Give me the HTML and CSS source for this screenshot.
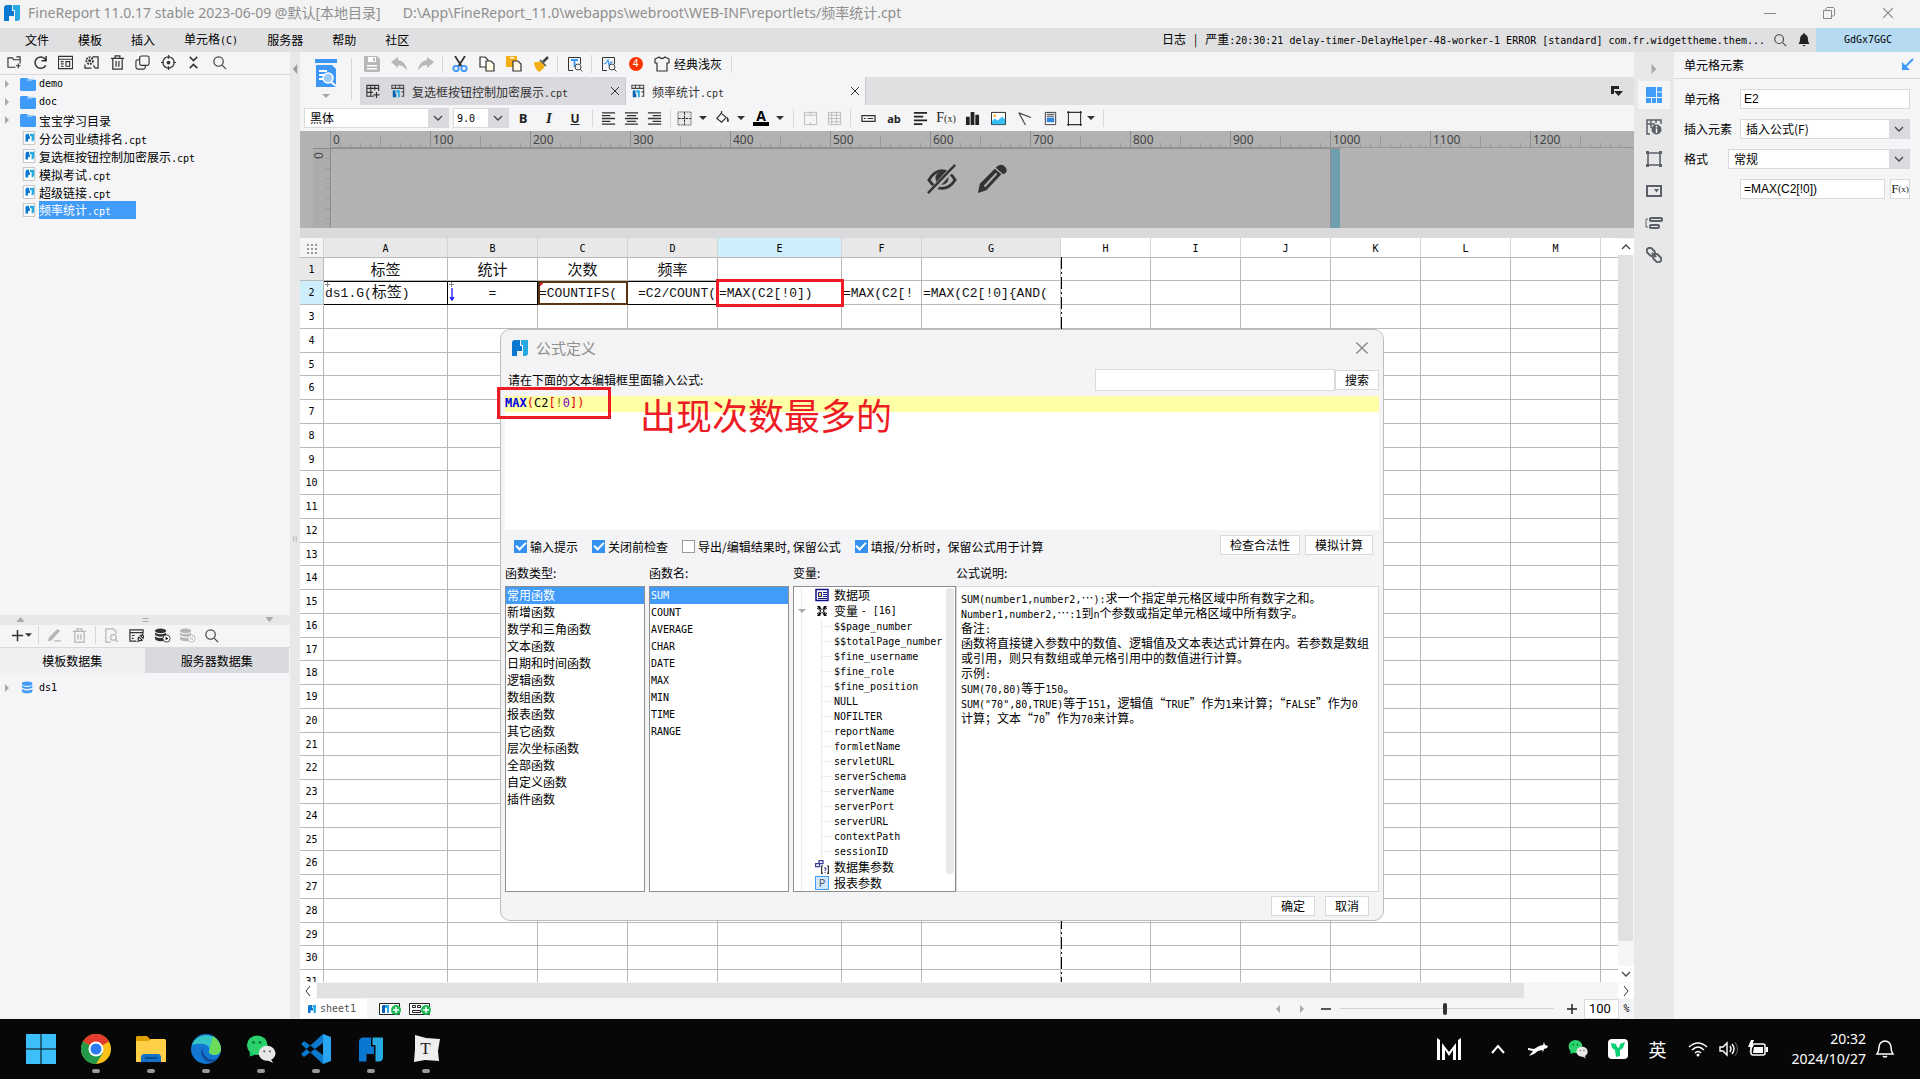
FILE: index.html
```html
<!DOCTYPE html>
<html lang="zh-CN">
<head>
<meta charset="utf-8">
<title>FineReport 11.0.17</title>
<link rel="stylesheet" href="styles.css">
</head>
<body>
<svg class="sprite" aria-hidden="true">
  <symbol id="logo" viewBox="0 0 16 16"><path fill="#0a78d0" d="M0 16V3Q0 0 3 0H8V6H10V11H5V16Z"/><path fill="#27aae1" d="M9 0H16V13Q16 16 13 16H11V5H9Z"/></symbol>
  <symbol id="search" viewBox="0 0 16 16"><g fill="none" stroke="#444" stroke-width="1.3"><circle cx="7" cy="7" r="5"/><path d="M11 11l4 4"/></g></symbol>
  <symbol id="chev" viewBox="0 0 10 10"><path fill="none" stroke="#444" stroke-width="1.3" d="M1 3l4 4 4-4"/></symbol>
  <symbol id="down" viewBox="0 0 8 8"><path fill="#333" d="M0 2h8L4 6z"/></symbol>
  <symbol id="right" viewBox="0 0 8 8"><path fill="#aaa" d="M2 0v8l4-4z"/></symbol>
  <symbol id="folder" viewBox="0 0 16 14"><path fill="#419bf9" d="M0 2l1-1h6l2 1 7 1v10l-1 1H1l-1-1z"/><path stroke="#cfe5ff" fill="none" d="M7 3h5l1-2"/></symbol>
  <symbol id="file" viewBox="0 0 16 16"><path fill="#fff" stroke="#bbb" d="M1.5.5h13v15h-13z"/><path fill="#0a78d0" d="M4 12V5l1-2h3v3h1v3H7v3z"/><path fill="#27aae1" d="M9 3h5v7l-2 2h-1V6H9z"/></symbol>
  <symbol id="trash" viewBox="0 0 16 16"><path fill="none" stroke="currentColor" stroke-width="1.3" d="M1 3.5h14M5.500 3V1h5v2M3 4v11h10V4M6.500 6.500v6M9.500 6.500v6"/></symbol>
  <symbol id="tabicon" viewBox="0 0 16 16"><path fill="none" stroke="#444" stroke-width="1.2" d="M1 6V1.500h13.500V14H12M1 5h13M5 1v4M10 1v4M12 9h3"/><path fill="#0a5fae" d="M2 15V8l1-1h2v4h1v4z"/><path fill="#27aae1" d="M6 7h4v8H8v-5H6z"/></symbol>
  <symbol id="close" viewBox="0 0 10 10"><path fill="none" stroke="currentColor" d="M1 1l8 8M9 1L1 9"/></symbol>
  <symbol id="lines" viewBox="0 0 16 16"><path stroke="#333" stroke-width="1.400" d="M1 2h14M1 5h9M1 8h14M1 11h9M1 14h14"/></symbol>
  <symbol id="wechat" viewBox="0 0 32 32"><ellipse cx="12" cy="12" rx="11" ry="10.500" fill="#2bd26b"/><path fill="#14c863" d="M4 18l0 6 6-2z"/><circle cx="8" cy="9" r="1.500" fill="#0b7a3a"/><circle cx="15" cy="9" r="1.500" fill="#0b7a3a"/><ellipse cx="22.500" cy="20.500" rx="9" ry="8" fill="#e8e8e8"/><path fill="#e8e8e8" d="M26 26l3 5-6-3z"/><circle cx="19.500" cy="18.500" r="1.200" fill="#666"/><circle cx="25.500" cy="18.500" r="1.200" fill="#666"/></symbol>
  <symbol id="db" viewBox="0 0 16 16"><ellipse cx="7" cy="3" rx="6" ry="2.500"/><path d="M1 5q6 3.500 12 0v2.500q-6 3.500-12 0zM1 9q6 3.500 12 0v2q0 3-6 3t-6-3z"/></symbol>
</svg>

<div class="app">
<header class="titlebar">
  <svg class="i16"><use href="#logo"/></svg>
  <span>FineReport 11.0.17 stable 2023-06-09 @默认[本地目录]</span>
  <span class="path">D:\App\FineReport_11.0\webapps\webroot\WEB-INF\reportlets/频率统计.cpt</span>
  <div class="wincontrols">
    <button aria-label="最小化"><svg class="i12" viewBox="0 0 12 12"><path stroke="#888" d="M0 6.500h12"/></svg></button>
    <button aria-label="还原"><svg class="i12" viewBox="0 0 12 12"><path fill="none" stroke="#888" d="M.5 3.500h8v8h-8zM3 3V1.500L4 .5h6.500l1 1V8l-1 1H9"/></svg></button>
    <button aria-label="关闭"><svg class="i12 grey"><use href="#close"/></svg></button>
  </div>
</header>

<nav class="menubar">
  <a href="#">文件</a><a href="#">模板</a><a href="#">插入</a><a href="#">单元格<span class="m">(C)</span></a><a href="#">服务器</a><a href="#">帮助</a><a href="#">社区</a>
  <div class="status">
    <div class="log"><span>日志</span><span>|</span><span>严重<span class="m">:20:30:21 delay-timer-DelayHelper-48-worker-1 ERROR [standard] com.fr.widgettheme.them...</span></span></div>
    <button class="menuicon" aria-label="搜索"><svg class="i14"><use href="#search"/></svg></button>
    <button class="menuicon" aria-label="通知"><svg class="i14" viewBox="0 0 14 14"><path fill="#222" d="M7 0q1 0 1 1.500Q11 2 11 7q0 2 1.500 4h-11Q3 9 3 7q0-5 3-5.500Q6 0 7 0zM5.500 12h3L7 13.500z"/></svg></button>
    <button class="user m">GdGx7GGC</button>
  </div>
</nav>

<div class="body">
<aside class="left">
  <section class="pane files">
    <div class="lefttools">
      <button aria-label="新建文件夹"><svg viewBox="0 0 16 16"><path fill="none" stroke="#333" stroke-width="1.2" d="M9 13H1V3h5l1 2h7V2h-4M14 5v4M12 9v5M9.500 11.500h5"/></svg></button>
      <button aria-label="刷新"><svg viewBox="0 0 16 16"><path fill="none" stroke="#333" stroke-width="1.600" d="M13.500 11a6 6 0 1 1-1-7L14 6M14 1v5H9"/></svg></button>
      <button aria-label="模板"><svg viewBox="0 0 16 16"><path fill="none" stroke="#333" stroke-width="1.2" d="M.5 1.500h15v13H.5zM1 4.500h14M3 7h3M3 9.500h3M3 12h3M8.500 7h4v5h-4z"/></svg></button>
      <button aria-label="设置"><svg viewBox="0 0 16 16"><path fill="none" stroke="#333" stroke-width="1.300" d="M9 2h6v12h-3M1 10v4h7M10 11l2 3"/><circle cx="6" cy="6" r="3.500" fill="none" stroke="#333" stroke-width="2" stroke-dasharray="2 1"/><circle cx="6" cy="6" r="1.500" fill="#333"/></svg></button>
      <button aria-label="删除"><svg><use href="#trash"/></svg></button>
      <button aria-label="复制"><svg viewBox="0 0 16 16"><g fill="none" stroke="#333" stroke-width="1.2"><rect x="5" y="1" width="10" height="10" rx="2"/><path d="M5 5H3Q1 5 1 7v6q0 2 2 2h6q2 0 2-2v-2"/></g></svg></button>
      <button aria-label="定位"><svg viewBox="0 0 16 16"><circle cx="8" cy="8" r="6" fill="none" stroke="#333" stroke-width="1.300"/><circle cx="8" cy="8" r="2" fill="#333"/><path stroke="#333" stroke-width="1.300" d="M8 0v4M8 12v4M0 8h3M13 8h3"/></svg></button>
      <button aria-label="折叠"><svg viewBox="0 0 16 16"><path fill="none" stroke="#333" stroke-width="1.600" d="M4 2l4 4 4-4M4 14l4-4 4 4"/></svg></button>
      <button aria-label="搜索"><svg><use href="#search"/></svg></button>
    </div>
    <ul class="tree">
      <li><svg class="tri"><use href="#right"/></svg><svg class="fi"><use href="#folder"/></svg><span class="m">demo</span></li>
      <li><svg class="tri"><use href="#right"/></svg><svg class="fi"><use href="#folder"/></svg><span class="m">doc</span></li>
      <li><svg class="tri"><use href="#right"/></svg><svg class="fi"><use href="#folder"/></svg><span>宝宝学习目录</span></li>
      <li class="leaf"><svg class="fi"><use href="#file"/></svg><span>分公司业绩排名<span class="m">.cpt</span></span></li>
      <li class="leaf"><svg class="fi"><use href="#file"/></svg><span>复选框按钮控制加密展示<span class="m">.cpt</span></span></li>
      <li class="leaf"><svg class="fi"><use href="#file"/></svg><span>模拟考试<span class="m">.cpt</span></span></li>
      <li class="leaf"><svg class="fi"><use href="#file"/></svg><span>超级链接<span class="m">.cpt</span></span></li>
      <li class="leaf"><svg class="fi"><use href="#file"/></svg><span class="picked">频率统计<span class="m">.cpt</span></span></li>
    </ul>
  </section>
  <section class="pane data">
    <div class="splitter"><svg viewBox="0 0 8 8"><path fill="#aaa" d="M0 6h8L4 1z"/></svg><svg viewBox="0 0 8 8"><path stroke="#aaa" d="M1 2.500h6M1 5.500h6"/></svg><svg viewBox="0 0 8 8"><path fill="#aaa" d="M0 1h8L4 6z"/></svg></div>
    <div class="datatools">
      <button aria-label="新增" class="wide"><svg viewBox="0 0 16 16"><path stroke="#333" stroke-width="1.600" d="M8 2v12M2 8h12"/></svg><svg class="i8"><use href="#down"/></svg></button><i class="sep"></i>
      <button aria-label="编辑" class="off"><svg viewBox="0 0 16 16"><path fill="#b5b5b5" d="M1 14l1-4 9-9 3 2-9 10zM8 13h7v1.500H8z"/></svg></button>
      <button aria-label="删除" class="off"><svg><use href="#trash"/></svg></button><i class="sep"></i>
      <button aria-label="预览" class="off"><svg viewBox="0 0 16 16"><g fill="none" stroke="#b5b5b5" stroke-width="1.300"><path d="M7 15H2V1h8l3 3v2"/><circle cx="10" cy="10" r="3"/><path d="M12 12l3 3"/></g></svg></button>
      <button aria-label="连接"><svg viewBox="0 0 16 16"><g fill="none" stroke="#333" stroke-width="1.300"><path d="M8 14H1V2h14v4M1 5h14M3 8h3M3 11h2"/><path d="M9 15l2-2M14 7l1-1M10.500 9.500l3.500 3.500q-2 1-3.500 0t0-3.500M12 8q2-1 3 0t0 3z"/></g></svg></button>
      <button aria-label="执行"><svg fill="#333"><use href="#db"/></svg><svg class="mini" viewBox="0 0 10 10"><circle cx="5" cy="5" r="4" fill="#fff" stroke="#333"/><path d="M4 3l3 2-3 2z"/></svg></button>
      <button aria-label="停止"><svg fill="#b5b5b5"><use href="#db"/></svg><svg class="mini" viewBox="0 0 10 10"><circle cx="5" cy="5" r="4" fill="#fff" stroke="#b5b5b5"/><path stroke="#aaa" d="M3 3l4 4M7 3L3 7"/></svg></button>
      <button aria-label="搜索"><svg><use href="#search"/></svg></button>
    </div>
    <div class="datatabs"><button class="on">模板数据集</button><button>服务器数据集</button></div>
    <ul class="tree dstree"><li><svg class="tri"><use href="#right"/></svg><svg class="fi" fill="#419bf9"><use href="#db"/></svg><span class="m">ds1</span></li></ul>
  </section>
</aside>
<div class="divider"><svg viewBox="0 0 8 12"><path fill="#999" d="M6 0v12L1 6z"/></svg><svg class="grip" viewBox="0 0 8 12"><path stroke="#aaa" d="M2.500 3v6M5.500 3v6"/></svg></div>

<main class="main">
  <div class="topbar">
    <button class="preview" aria-label="预览"><svg viewBox="0 0 22 28"><path fill="#3d97f5" d="M0 0h22v4H0zM1 6h16l4 4v18H1z"/><path stroke="#fff" stroke-width="2" d="M4 12h8M4 16h5M4 20h5"/><circle cx="13" cy="19" r="5" fill="#9fcbfa" stroke="#fff" stroke-width="1.500"/><path stroke="#fff" stroke-width="2" d="M16 23l5 4"/></svg><svg class="i8 fade"><use href="#down"/></svg></button>
    <div class="topright">
      <div class="tools">
        <button aria-label="保存"><svg viewBox="0 0 16 16"><path fill="#b8b8b8" d="M0 1l1-1h12l3 3v12l-1 1H1l-1-1z"/><path fill="#fff" d="M4 1h8v5H4zM3 9h10v1.500H3zM3 12h10v1.500H3z"/><path fill="#b8b8b8" d="M9 2h2v3H9z"/></svg></button>
        <button aria-label="撤销"><svg viewBox="0 0 16 16"><path fill="#b8b8b8" d="M0 6l7-5v3q8 1 9 11-3-6-9-6v3z"/></svg></button>
        <button aria-label="重做"><svg viewBox="0 0 16 16"><path fill="#b8b8b8" d="M16 6L9 1v3Q1 5 0 15q3-6 9-6v3z"/></svg></button><i class="sep"></i>
        <button aria-label="剪切"><svg viewBox="0 0 16 16"><path stroke="#333" stroke-width="1.800" d="M3 0l7 11M13 0L6 11"/><circle cx="4" cy="12.500" r="2.700" fill="none" stroke="#3d97f5" stroke-width="1.800"/><circle cx="12" cy="12.500" r="2.700" fill="none" stroke="#3d97f5" stroke-width="1.800"/></svg></button>
        <button aria-label="复制"><svg viewBox="0 0 16 16"><path fill="#fff" stroke="#333" stroke-width="1.200" d="M1 1h5l3 3v7H1z"/><path fill="#fffbe6" stroke="#333" stroke-width="1.200" d="M7 5h5l3 3v7H7z"/></svg></button>
        <button aria-label="粘贴"><svg viewBox="0 0 16 16"><path fill="#f5ae13" d="M0 0h11v11H0z"/><path fill="#fff" d="M4 1h4v1.500H4z"/><path fill="#fffbe6" stroke="#333" stroke-width="1.200" d="M7 5h5l3 3v7H7z"/></svg></button>
        <button aria-label="格式刷"><svg viewBox="0 0 16 16"><path stroke="#444" stroke-width="2.500" d="M15 1l-5 5"/><path fill="#f5ae13" d="M1 6q4 1 6-1l5 5q-2 4-6 6-5-4-5-10z"/><path stroke="#555" stroke-width="1.500" d="M7 4l6 6"/></svg></button><i class="sep"></i>
        <button aria-label="文字查找"><svg viewBox="0 0 16 16"><path fill="none" stroke="#333" d="M6 14.500H1.500V1.500h12V8"/><path stroke="#3d97f5" stroke-width="1.800" d="M4 4h7M7.500 4v7"/><circle cx="11" cy="11" r="3" fill="none" stroke="#444"/><path stroke="#444" d="M13 13l2.500 2.500"/></svg></button><i class="sep"></i>
        <button aria-label="性能分析"><svg viewBox="0 0 16 16"><path fill="none" stroke="#333" d="M6 14.500H1.500V1.500h12V8"/><path fill="none" stroke="#3d97f5" stroke-width="1.200" d="M3 8l2-1 2-3 1 5 2-3h2"/><circle cx="11" cy="11" r="3" fill="none" stroke="#444"/><path stroke="#444" d="M13 13l2.500 2.500"/></svg></button>
        <button aria-label="提醒"><span class="badge">4</span></button>
        <button class="theme"><svg viewBox="0 0 16 16"><path fill="none" stroke="#333" stroke-width="1.200" d="M5 1L1 3v4h2v8h10V7h2V3l-4-2q-3 3-6 0z"/></svg><span>经典浅灰</span></button><i class="sep"></i>
      </div>
      <div class="tabs">
        <button class="newtab" aria-label="新建"><svg class="i14" viewBox="0 0 16 16"><path fill="none" stroke="#333" stroke-width="1.300" d="M9 14H1V1.500h13.500V8M1 5h13M1 9.500h7M5.500 1v13M10 1v6M12 9v7M8.500 12.500h7"/></svg></button>
        <div class="tab"><svg class="i14"><use href="#tabicon"/></svg><span>复选框按钮控制加密展示<span class="m">.cpt</span></span><button aria-label="关闭"><svg class="i10"><use href="#close"/></svg></button></div>
        <div class="tab on"><svg class="i14"><use href="#tabicon"/></svg><span>频率统计<span class="m">.cpt</span></span><button aria-label="关闭"><svg class="i10"><use href="#close"/></svg></button></div>
        <button class="tablist" aria-label="标签列表"><svg class="i12" viewBox="0 0 12 12"><path fill="#222" d="M0 1h8v3H3v5H0zM3 6h9l-4.500 5z"/></svg></button>
      </div>
    </div>
  </div>

  <div class="format">
    <div class="combo fontname"><select aria-label="字体"><option>黑体</option></select><span class="arrow"><svg class="i10"><use href="#chev"/></svg></span></div>
    <div class="combo fontsize"><select aria-label="字号"><option>9.0</option></select><span class="arrow"><svg class="i10"><use href="#chev"/></svg></span></div>
    <button class="f bold">B</button><button class="f ital">I</button><button class="f under">U</button><i class="sep"></i>
    <button class="al" aria-label="左对齐"><svg><use href="#lines"/></svg></button>
    <button class="al" aria-label="居中"><svg viewBox="0 0 16 16"><path stroke="#333" stroke-width="1.400" d="M1 2h14M3 5h10M1 8h14M3 11h10M1 14h14"/></svg></button>
    <button class="al" aria-label="右对齐"><svg viewBox="0 0 16 16"><path stroke="#333" stroke-width="1.400" d="M1 2h14M6 5h9M1 8h14M6 11h9M1 14h14"/></svg></button><i class="sep"></i>
    <button class="dd" aria-label="边框"><svg viewBox="0 0 16 16"><rect x="1" y="1" width="14" height="14" fill="#e8e8e8" stroke="#222" stroke-dasharray="1 1"/><path stroke="#222" d="M1 8h14M8 1v14" stroke-dasharray="3 1"/></svg><svg class="i8"><use href="#down"/></svg></button>
    <button class="dd" aria-label="填充"><svg viewBox="0 0 16 16"><path fill="none" stroke="#333" stroke-width="1.300" d="M6 2l6 5-5 5-5-4 5-6V0"/><path fill="#333" d="M13 6q3 4 1 6-2-1-1-6z"/><path fill="#fff" d="M0 13h16v3H0z"/></svg><svg class="i8"><use href="#down"/></svg></button>
    <button class="dd" aria-label="字体颜色"><span class="acolor">A</span><svg class="i8"><use href="#down"/></svg></button><i class="sep"></i>
    <button class="mg" aria-label="合并"><svg viewBox="0 0 16 16"><path fill="none" stroke="#bbb" d="M1.500 1.500h13v13h-13zM1 4.500h14M8 1v3M8 12v3"/></svg></button>
    <button class="mg" aria-label="拆分"><svg viewBox="0 0 16 16"><path fill="none" stroke="#bbb" d="M1.500 1.500h13v13h-13zM1 4.500h14M1 8h14M1 11.500h14M5 1v14M10 1v14"/></svg></button><i class="sep"></i>
    <button class="f" aria-label="控件"><svg viewBox="0 0 16 16"><path fill="none" stroke="#333" stroke-width="1.300" d="M1 5h14v6H1zM3 8h2M7 8h6"/></svg></button>
    <button class="f ab">ab</button>
    <button class="f" aria-label="富文本"><svg viewBox="0 0 16 16"><path stroke="#222" stroke-width="2" d="M1 2h14M1 6h10M1 10h14M1 14h9"/></svg></button>
    <button class="f fx">F<small>(x)</small></button>
    <button class="f" aria-label="图表"><svg viewBox="0 0 16 16"><path fill="#222" d="M1 6h4v9H1zM6 1h4v14H6zM11 4h4v11h-4z"/></svg></button>
    <button class="f" aria-label="图片"><svg viewBox="0 0 16 16"><path fill="#fff" stroke="#222" d="M.5 1.500h15v13H.5z"/><circle cx="4" cy="5" r="1.500" fill="#f8b84a"/><path fill="#35bdf5" d="M1 11l3-3 3 2 5-4 3 3v5H1z"/></svg></button>
    <button class="f" aria-label="斜线"><svg viewBox="0 0 16 16"><path fill="none" stroke="#444" stroke-width="1.200" d="M2 2l13 5M2 2l7 13"/></svg></button>
    <button class="f" aria-label="子报表"><svg viewBox="0 0 16 16"><path fill="#fff" stroke="#333" d="M2.500 1.500h11v13h-11z"/><path stroke="#333" d="M4 3.500h8M4 5.500h8"/><path fill="#2f84dd" d="M4 7h8v5H4z"/></svg></button>
    <button class="dd float" aria-label="悬浮元素"><svg viewBox="0 0 16 16"><path fill="none" stroke="#333" stroke-width="1.200" d="M0 1.500h16M0 14.500h16M1.500 0v16M14.500 0v16"/></svg><svg class="i8"><use href="#down"/></svg></button><i class="sep"></i>
  </div>

  <div class="canvas">
    <div class="hruler" id="hruler"></div>
    <div class="vruler"><span>0</span></div>
    <div class="paper"></div>
    <div class="hint">
      <svg viewBox="0 0 32 32"><path fill="none" stroke="#333" stroke-width="3" d="M2 17Q8 7 16 7t14 10q-6 9-14 9T2 17z"/><circle cx="16" cy="15" r="7" fill="#333"/><path stroke="#b2b2b2" stroke-width="6" d="M30 2L3 31"/><path stroke="#333" stroke-width="2.500" d="M30 1L1 31"/></svg>
      <svg viewBox="0 0 32 32"><path fill="#333" d="M1 31l2-10L19 5l7 6-16 17zM21 3q4-4 8-1t2 7l-3 2-8-7z"/><path stroke="#b2b2b2" stroke-width="2" d="M8 24L21 10"/></svg>
    </div>
  </div>
  <div class="band"></div>

  <div class="sheetarea">
    <div class="sheet">
      <table id="grid">
        <colgroup><col class="c24"><col class="c124"><col class="c90"><col class="c90"><col class="c90"><col class="c124"><col class="c80"><col class="c139"><col class="c90"><col class="c90"><col class="c90"><col class="c90"><col class="c90"><col class="c90"><col class="c90"></colgroup>
        <thead><tr><th class="corner"><svg class="i10" viewBox="0 0 10 10"><path stroke="#999" stroke-width="2" stroke-dasharray="2 2" d="M0 1h10M0 5h10M0 9h10"/></svg></th><th>A</th><th>B</th><th>C</th><th>D</th><th class="hot">E</th><th>F</th><th>G</th><th class="free">H</th><th class="free">I</th><th class="free">J</th><th class="free">K</th><th class="free">L</th><th class="free">M</th><th class="free"></th></tr></thead>
        <tbody>
          <tr><th>1</th><td class="mid">标签</td><td class="mid">统计</td><td class="mid">次数</td><td class="mid">频率</td><td></td><td></td><td></td><td></td><td></td><td></td><td></td><td></td><td></td><td></td></tr>
          <tr class="formulas"><th class="hot">2</th><td class="box mark"><span class="c">ds1.G(</span>标签<span class="c">)</span></td><td class="box mid mark"><svg class="flow" viewBox="0 0 6 16"><path fill="none" stroke="#00f" stroke-width="1.200" d="M3 3v12M1 12l2 3 2-3"/></svg><span class="c">=</span></td><td class="box picked"><span class="c">=COUNTIFS(</span></td><td class="box end"><span class="c">=C2/COUNT(</span></td><td class="target"><span class="c">=MAX(C2[!0])</span></td><td><span class="c">=MAX(C2[!</span></td><td><span class="c">=MAX(C2[!0]{AND(</span></td><td></td><td></td><td></td><td></td><td></td><td></td><td></td></tr>
        </tbody>
      </table>
      <div class="pagebreak"></div>
    </div>
    <div class="vscroll"><button aria-label="上"><svg class="i10 flip"><use href="#chev"/></svg></button><div class="thumb"></div><button aria-label="下"><svg class="i10"><use href="#chev"/></svg></button></div>
  </div>
  <div class="hscroll"><button aria-label="左"><svg class="i10" viewBox="0 0 10 10"><path fill="none" stroke="#333" d="M7 0L3 5l4 5"/></svg></button><div class="thumb"></div><button aria-label="右"><svg class="i10" viewBox="0 0 10 10"><path fill="none" stroke="#333" d="M3 0l4 5-4 5"/></svg></button></div>
  <div class="sheetbar">
    <button class="sheettab"><svg class="i8"><use href="#logo"/></svg><span class="m">sheet1</span></button>
    <button class="add" aria-label="新增报表"><svg viewBox="0 0 22 14"><path fill="#fff" stroke="#222" d="M.5 1.500h20v11H.5z"/><path fill="#0a5fae" d="M3 11V4l1-1h2v8z"/><path fill="#27aae1" d="M6 3h4v8H8V6H6z"/><circle cx="17" cy="8" r="5" fill="#1db954"/><path stroke="#fff" stroke-width="1.500" d="M17 5v6M14 8h6"/></svg></button>
    <button class="add" aria-label="新增表单"><svg viewBox="0 0 22 14"><path fill="#fff" stroke="#222" d="M.5 1.500h20v11H.5zM3.500 3.500h3v2h-3zM8.500 3.500h3v2h-3zM3.500 8.500h8v2h-8z"/><circle cx="17" cy="8" r="5" fill="#1db954"/><path stroke="#fff" stroke-width="1.500" d="M17 5v6M14 8h6"/></svg></button>
    <div class="zoombar">
      <button aria-label="上一页"><svg class="i8" viewBox="0 0 8 8"><path fill="#aaa" d="M6 0v8L2 4z"/></svg></button>
      <button aria-label="下一页"><svg class="i8"><use href="#right"/></svg></button>
      <button aria-label="缩小"><svg class="i10" viewBox="0 0 10 10"><path stroke="#222" stroke-width="1.500" d="M0 5h10"/></svg></button>
      <input type="range" min="0" max="200" value="98" aria-label="缩放">
      <button aria-label="放大"><svg class="i10" viewBox="0 0 10 10"><path stroke="#222" stroke-width="1.500" d="M0 5h10M5 0v10"/></svg></button>
      <input class="pct" type="text" value="100" aria-label="缩放比例"><span class="m">%</span>
    </div>
  </div>

  <section class="dialog" role="dialog" aria-label="公式定义">
    <header><svg class="i16"><use href="#logo"/></svg><h2>公式定义</h2><button aria-label="关闭"><svg class="i14 grey"><use href="#close"/></svg></button></header>
    <div class="find"><label for="q">请在下面的文本编辑框里面输入公式:</label><input id="q" type="text"><button class="btn">搜索</button></div>
    <div class="editor"><div class="line"><b>MAX</b><span class="red">(</span>C2<span class="red">[</span><span class="olive">!</span><span class="purple">0</span><span class="red">])</span></div>
      <div class="formulabox"></div><p class="note">出现次数最多的</p></div>
    <div class="options">
      <label><input type="checkbox" checked>输入提示</label>
      <label><input type="checkbox" checked>关闭前检查</label>
      <label><input type="checkbox">导出/编辑结果时, 保留公式</label>
      <label><input type="checkbox" checked>填报/分析时，保留公式用于计算</label>
      <div class="checks"><button class="btn">检查合法性</button><button class="btn">模拟计算</button></div>
    </div>
    <div class="cols">
      <div class="col"><h3>函数类型:</h3><ul class="list"><li class="on">常用函数</li><li>新增函数</li><li>数学和三角函数</li><li>文本函数</li><li>日期和时间函数</li><li>逻辑函数</li><li>数组函数</li><li>报表函数</li><li>其它函数</li><li>层次坐标函数</li><li>全部函数</li><li>自定义函数</li><li>插件函数</li></ul></div>
      <div class="col"><h3>函数名:</h3><ul class="list names"><li class="on">SUM</li><li>COUNT</li><li>AVERAGE</li><li>CHAR</li><li>DATE</li><li>MAX</li><li>MIN</li><li>TIME</li><li>RANGE</li></ul></div>
      <div class="col vars"><h3>变量:</h3>
        <div class="list varlist"><ul class="vartree">
          <li class="top"><svg viewBox="0 0 14 14"><path fill="#fff" stroke="#11118a" stroke-width="1.500" d="M1 1.500h12v11H1z"/><path fill="#ffe94d" stroke="#11118a" d="M3.500 4.500h3v4h-3z"/><path stroke="#11118a" d="M8 4.500h4M8 6.500h4M8 8.500h4M3 10.500h9"/></svg>数据项</li>
          <li class="top open"><svg viewBox="0 0 14 14"><path fill="#111" d="M2 2l3 0 2 4-3-1zM12 2L9 2 7 6l3-1zM2 12l3 0 2-4-3 1zM12 12l-3 0-2-4 3 1z"/><path stroke="#111" d="M2 4l4 3-4 3M12 4L8 7l4 3" fill="none"/></svg>变量 <span class="m">- [16]</span></li>
          <li class="sub"><ul class="m"><li>$$page_number</li><li>$$totalPage_number</li><li>$fine_username</li><li>$fine_role</li><li>$fine_position</li><li>NULL</li><li>NOFILTER</li><li>reportName</li><li>formletName</li><li>servletURL</li><li>serverSchema</li><li>serverName</li><li>serverPort</li><li>serverURL</li><li>contextPath</li><li>sessionID</li></ul></li>
          <li class="top"><svg viewBox="0 0 14 14"><path fill="none" stroke="#3a3a9a" stroke-width="1.200" d="M4 .6h4v3H4zM.6 3.600h4v3h-4z"/><path fill="none" stroke="#333" stroke-width="1.200" d="M8 6H6.600v7.400H8M12 6h1.400v7.400H12"/><path fill="none" stroke="#3a3a9a" d="M9 8h2v1.500l-1 .5v1M10 12v1"/></svg>数据集参数</li>
          <li class="top"><span class="p">P</span>报表参数</li>
        </ul><div class="bar"></div></div>
      </div>
      <div class="col desc"><h3>公式说明:</h3>
        <div class="list text">
          <p><span class="m">SUM(number1,number2,</span>⋯<span class="m">):</span>求一个指定单元格区域中所有数字之和。</p>
          <p><span class="m">Number1,number2,</span>⋯<span class="m">:1</span>到<span class="m">n</span>个参数或指定单元格区域中所有数字。</p>
          <p>备注<span class="m">:</span></p>
          <p>函数将直接键入参数中的数值、逻辑值及文本表达式计算在内。若参数是数组或引用，则只有数组或单元格引用中的数值进行计算。</p>
          <p>示例<span class="m">:</span></p>
          <p><span class="m">SUM(70,80)</span>等于<span class="m">150</span>。</p>
          <p><span class="m">SUM("70",80,TRUE)</span>等于<span class="m">151</span>，逻辑值“<span class="m">TRUE</span>”作为<span class="m">1</span>来计算；“<span class="m">FALSE</span>”作为<span class="m">0</span><br>计算；文本“<span class="m">70</span>”作为<span class="m">70</span>来计算。</p>
        </div>
      </div>
    </div>
    <footer><button class="btn">确定</button><button class="btn">取消</button></footer>
  </section>
</main>

<nav class="strip">
  <svg class="collapse"><use href="#right"/></svg>
  <button class="on" aria-label="单元格元素"><svg viewBox="0 0 16 16"><path fill="#419bf9" d="M0 0h10v10H0zM11 0h5v4.500h-5zM11 5.500h5V10h-5zM0 11h5v5H0zM6 11h4v5H6zM11 11h5v5h-5z"/></svg></button>
  <button aria-label="单元格属性"><svg viewBox="0 0 16 16"><path fill="none" stroke="#5a5f68" stroke-width="1.500" d="M15 5V1H1v14h3M1 5h8M5 1v8M10 1v3"/><circle cx="10.500" cy="10.500" r="5" fill="#5a5f68"/><path stroke="#fff" stroke-width="1.500" d="M10.500 7v1.500M10.500 9.500V14"/></svg></button>
  <button aria-label="悬浮元素"><svg viewBox="0 0 16 16"><path fill="none" stroke="#5a5f68" stroke-width="1.600" d="M2 2h12v12H2z"/><path fill="#5a5f68" d="M0 0h3v3H0zM13 0h3v3h-3zM0 13h3v3H0zM13 13h3v3h-3z"/></svg></button>
  <button aria-label="控件设置"><svg viewBox="0 0 16 16"><path fill="none" stroke="#5a5f68" stroke-width="2" d="M1 3h14v10H1z"/><path fill="#5a5f68" d="M8 6h5l-2.500 3.500z"/></svg></button>
  <button aria-label="条件属性"><svg class="cond" viewBox="0 0 18 16"><g fill="none" stroke="#5a5f68" stroke-width="2"><rect x="5" y="3" width="12" height="3" rx="1"/><rect x="5" y="10" width="9" height="3" rx="1"/><path stroke-width="1" d="M3 4H1v8h2"/></g></svg></button>
  <button aria-label="超级链接"><svg viewBox="0 0 16 16"><g fill="none" stroke="#5a5f68" stroke-width="2" transform="rotate(45 8 8)"><rect x="-1" y="5" width="9" height="6" rx="3"/><rect x="8" y="5" width="9" height="6" rx="3"/><path d="M5 8h6"/></g></svg></button>
</nav>

<aside class="props">
  <header><h2>单元格元素</h2><svg class="i12" viewBox="0 0 12 12"><path fill="none" stroke="#419bf9" stroke-width="2" d="M11 1L2 10"/><path fill="#419bf9" d="M0 4v8h8z"/></svg></header>
  <form>
    <div class="row"><label for="cell">单元格</label><input id="cell" type="text" value="E2"></div>
    <div class="row"><label for="el">插入元素</label><div class="combo"><select id="el"><option>插入公式(F)</option></select><span class="arrow"><svg class="i10"><use href="#chev"/></svg></span></div></div>
    <div class="row short"><label for="fmt">格式</label><div class="combo"><select id="fmt"><option>常规</option></select><span class="arrow"><svg class="i10"><use href="#chev"/></svg></span></div></div>
    <div class="row"><label for="expr"></label><input id="expr" type="text" value="=MAX(C2[!0])" aria-label="公式"><button type="button" class="fxbtn fx">F<small>(x)</small></button></div>
  </form>
</aside>
</div>

<footer class="taskbar">
  <div class="apps">
    <button class="start" aria-label="开始"><svg viewBox="0 0 30 30"><path fill="#3cc0fb" d="M0 0h14.500v14.500H0zM15.500 0H30v14.500H15.500zM0 15.500h14.500V30H0zM15.500 15.500H30V30H15.500z"/></svg></button>
    <button aria-label="Chrome"><svg viewBox="0 0 30 30"><circle cx="15" cy="15" r="15" fill="#fbc116"/><path fill="#e33b2e" d="M15 15L2 7.500a15 15 0 0 1 26 0z"/><path fill="#229a4a" d="M15 15L2 7.500A15 15 0 0 0 15 30l7-11z"/><circle cx="15" cy="15" r="7.500" fill="#fff"/><circle cx="15" cy="15" r="5.500" fill="#2a7bef"/></svg></button>
    <button aria-label="资源管理器"><svg viewBox="0 0 30 30"><path fill="#e0a000" d="M0 3l1-1h10l3 3v5H0z"/><path fill="#ffcf48" d="M0 7h12l3-2h14l1 1v22H0z"/><path fill="#1473c8" d="M5 28v-6l2-2h16l2 2v6z"/><path stroke="#0a4c91" stroke-width="2" d="M9 24h12"/></svg></button>
    <button aria-label="Edge"><svg viewBox="0 0 30 30"><circle cx="15" cy="15" r="15" fill="#1276d3"/><path fill="#35c5c4" d="M1 11a15 15 0 0 1 29 5q-1 5-7 5-6-1-5-3 2-6-5-8-6-1-12 1z"/><path fill="#6ddc5a" d="M22 2q8 5 8 14-1 5-7 5-5-1-5-3z"/><path fill="#0d4d9c" d="M12 13q-5 7 3 14 6 3 11-2-8 2-12-3-3-5-2-9z"/></svg></button>
    <button aria-label="微信"><svg><use href="#wechat"/></svg></button>
    <button aria-label="VS Code"><svg viewBox="0 0 30 30"><path fill="#0b79cb" d="M22 0L0 20l3 3L22 9zM22 30L0 10l3-3 19 14z"/><path fill="#2aa5f3" d="M22 0l8 3v24l-8 3z"/></svg></button>
    <button aria-label="FineReport"><svg class="fr"><use href="#logo"/></svg></button>
    <button aria-label="Typora"><svg viewBox="0 0 30 30"><path fill="#eee" d="M4 1l11 3L29 5l-2 12 1 10-14-1-11 2 1-13z"/></svg><span class="ty">T</span></button>
  </div>
  <div class="tray">
    <span><svg class="big" viewBox="0 0 24 24"><path fill="#fff" d="M0 1l3 2v20H0zM24 1l-3 2v20h3zM5 23V6l7 9 7-9v17h-3V13l-4 6-4-6v10z"/></svg></span>
    <span><svg viewBox="0 0 20 20"><path fill="none" stroke="#fff" stroke-width="2" d="M4 14l6-7 6 7"/></svg></span>
    <span><svg viewBox="0 0 20 20"><path fill="#fff" d="M0 9l6 1 5-3 4-1 1-3 1 3 3 1-1 2-3 1-1 3-1-2-4 1-4 3-5 2 4-5-5-1z"/></svg></span>
    <span><svg><use href="#wechat"/></svg></span>
    <span><svg viewBox="0 0 20 20"><rect width="20" height="20" rx="4" fill="#fff"/><path fill="#08cf73" d="M3 4l5 1 1 3 2 1 1-4 5-2-2 6-3 2v6l-4 1-1-7-3-2z"/></svg></span>
    <span class="ime">英</span>
    <span class="sys"><svg viewBox="0 0 20 20"><g fill="none" stroke="#fff" stroke-width="1.600"><path d="M1 8q9-8 18 0M4 11q6-6 12 0M7 14q3-3 6 0"/></g><circle cx="10" cy="16" r="1.500" fill="#fff"/></svg></span>
    <span class="sys"><svg viewBox="0 0 20 20"><path fill="none" stroke="#fff" stroke-width="1.400" d="M2 8h3l4-4v12l-4-4H2zM12 7q2 3 0 6M14 5q4 5 0 10"/><path fill="none" stroke="#666" d="M17 3q5 7 0 14"/></svg></span>
    <span class="sys"><svg viewBox="0 0 20 20"><rect x="3" y="5" width="14" height="11" rx="2" fill="none" stroke="#fff" stroke-width="1.500"/><path fill="#fff" d="M6 8h9v6H5zM18 8h2v5h-2zM3 1L0 8h3l-2 6 5-8H4l2-5z"/></svg></span>
    <div class="clock"><span>20:32</span><span>2024/10/27</span></div>
    <svg class="bell" viewBox="0 0 20 20"><path fill="none" stroke="#fff" stroke-width="1.500" d="M2 15q2-3 2-7a6 6 0 0 1 12 0q0 4 2 7zM8 17q2 2 4 0"/></svg>
  </div>
</footer>
</div>
<script src="grid.js"></script>
</body>
</html>
```
FILE: styles.css
```css
* { box-sizing: border-box; }
body, h2, h3, p, ul { margin: 0; padding: 0; font-size: 12px; font-weight: 400; }
ul { list-style: none; }
body { font-family: "Noto Sans CJK SC", sans-serif; color: #000; background: #f5f5f7; line-height: 15px; overflow: hidden; }
button { border: 0; padding: 0; margin: 0; background: none; font: inherit; color: inherit; display: flex; align-items: center; justify-content: center; }
input, select { font: inherit; color: inherit; margin: 0; border-radius: 0; }
a { color: inherit; text-decoration: none; }
svg { display: block; flex: none; }
.sprite { position: absolute; width: 0; height: 0; }
.m { font-family: "DejaVu Sans Mono", monospace; font-size: 10px; line-height: 10px; }
.i8 { width: 8px; height: 8px; }
.i10 { width: 10px; height: 10px; }
.i12 { width: 12px; height: 12px; }
.i14 { width: 14px; height: 14px; }
.i16 { width: 16px; height: 16px; }
.grey { color: #888; }
.flip { transform: rotate(180deg); }
.sep { width: 7px; height: 18px; flex: none; background: linear-gradient(#d8d8da, #d8d8da) center / 1px 100% no-repeat; }

.app { display: flex; flex-direction: column; height: 100vh; }

.titlebar { flex: none; height: 28px; background: #f3f3f3; display: flex; align-items: center; padding: 0 0 2px 4px; font: 14px/20px "Noto Sans", "Noto Sans CJK SC", sans-serif; color: #8f8f8f; white-space: nowrap; }
.titlebar .i16 { margin-right: 8px; }
.titlebar .path { margin-left: 22px; }
.wincontrols { margin-left: auto; display: flex; padding-right: 3px; }
.wincontrols button { width: 59px; height: 26px; }

.menubar { flex: none; height: 24px; background: #e0e0e2; display: flex; align-items: center; gap: 29px; padding-left: 25px; white-space: nowrap; line-height: 13px; }
.menubar a, .log { padding-bottom: 2px; }
.status { margin-left: auto; display: flex; align-items: center; }
.log { display: flex; gap: 8px; margin-right: 3px; }
.menuicon { width: 24px; height: 24px; }
.user { width: 104px; height: 24px; background: #b5daf2; }

.body { flex: 1; min-height: 0; display: flex; }

.left { width: 290px; flex: none; display: flex; flex-direction: column; }
.pane { flex: 563 1 0; min-height: 0; }
.pane.data { flex-grow: 404; }
.lefttools { height: 23px; border-bottom: 1px solid #d8d8da; display: flex; align-items: center; justify-content: space-between; width: 100%; padding: 0 63px 2px 7px; }
.lefttools svg { width: 15px; height: 15px; color: #333; }
.tree li { display: flex; align-items: center; height: 18px; padding-left: 3px; white-space: nowrap; }
.tree .tri { width: 8px; height: 10px; margin-right: 9px; }
.tree .fi { width: 16px; height: 14px; margin-right: 3px; }
.tree .leaf { padding-left: 21px; }
.tree .leaf .fi { margin-right: 2px; }
.tree .picked { background: #419bf9; color: #fff; height: 18px; line-height: 18px; width: 97px; }
.splitter { height: 10px; background: #e8e8e8; display: flex; justify-content: space-between; align-items: center; padding: 0 16px; }
.splitter svg { width: 9px; height: 8px; }
.datatools { height: 23px; border-bottom: 1px solid #d8d8da; display: flex; align-items: center; padding: 0 0 2px 7px; }
.datatools svg { width: 15px; height: 15px; }
.datatools .i8 { width: 7px; height: 8px; }
.datatools button { width: 25px; position: relative; }
.datatools .wide { width: 28px; }
.datatools .mini { position: absolute; right: 3px; bottom: 0; width: 9px; height: 9px; }
.off { color: #b5b5b5; }
.datatabs { display: flex; height: 25px; }
.datatabs button { flex: 1; background: #d9dade; margin-right: 1px; padding-bottom: 1px; }
.datatabs button.on { background: #f0f0f2; margin: 0; }
.dstree { padding-top: 6px; }
.divider { width: 10px; flex: none; background: #e8e8e8; display: flex; flex-direction: column; align-items: center; padding-top: 12px; }
.divider svg { width: 7px; height: 10px; }
.divider .grip { margin-top: 460px; width: 8px; }

.main { flex: 1; min-width: 0; display: flex; flex-direction: column; position: relative; }
.topbar { display: flex; height: 53px; flex: none; }
.preview { width: 52px; margin: 6px 6px 5px 0; border-right: 1px solid #d8d8da; flex-direction: column; justify-content: flex-start; gap: 5px; padding-top: 1px; }
.preview svg:first-child { width: 22px; height: 28px; }
.preview .fade { opacity: .4; }
.topright { flex: 1; min-width: 0; }
.tools { height: 25px; display: flex; align-items: center; padding-bottom: 2px; }
.tools button { width: 27px; height: 22px; }
.tools svg { width: 16px; height: 16px; }
.tools .theme { width: auto; padding: 0 6px 0 5px; gap: 4px; }
.badge { width: 14px; height: 14px; border-radius: 7px; background: #ff3300; color: #fff; font: 10px/14px Roboto, sans-serif; }
.tabs { height: 28px; margin-left: 2px; background: #e0e0e3; display: flex; align-items: stretch; color: #333; }
.newtab { width: 26px; background: #dadade; }
.tab { width: 240px; background: #dadade; display: flex; align-items: center; gap: 7px; padding-left: 5px; border-right: 1px solid #c9c9cd; white-space: nowrap; }
.tab.on { background: #f5f5f7; }
.tab button { margin: 0 5px 0 auto; }
.tablist { margin: 0 11px 0 auto; }

.format { height: 26px; flex: none; display: flex; align-items: center; padding-left: 4px; }
.format .sep { width: 9px; }
.format button { height: 22px; flex: none; }
.format button svg:first-child { width: 15px; height: 15px; }
.combo { display: grid; grid-template-columns: 1fr 20px; height: 20px; border: 1px solid #dadadd; background: #fff; }
.combo select { grid-area: 1 / 1 / 2 / 3; appearance: none; border: 0; background: none; padding: 0 5px; line-height: 18px; width: 100%; min-width: 0; }
.combo .arrow { grid-area: 1 / 2; background: #dadbde; display: grid; place-items: center; pointer-events: none; }
.fontname { width: 145px; margin-right: 4px; }
.fontsize { width: 56px; margin-right: 1px; }
.fontsize select { font: 10px "DejaVu Sans Mono", monospace; padding: 0 3px; }
.format .f { width: 26px; color: #222; }
.format .al { width: 23px; }
.format .mg { width: 24px; }
.format .dd { width: 38px; gap: 7px; justify-content: flex-start; padding-left: 2px; }
.format .float { width: 36px; gap: 5px; padding-left: 4px; }
.format .bold { font: 700 13px "Open Sans", sans-serif; }
.format .ital { font: italic 700 15px "Liberation Serif", serif; }
.format .under { font: 700 12px "Open Sans", sans-serif; text-decoration: underline; }
.format .ab { font: 700 11px "Open Sans", sans-serif; }
.acolor { width: 16px; height: 16px; border-bottom: 4px solid #000; font: 700 14px/11px "Open Sans", sans-serif; }
.fx { font: 14px "Liberation Serif", serif; color: #222; }
.fx small { font-size: 10px; }

.canvas { height: 97px; flex: none; background: #b2b2b2; display: grid; grid-template: 17px 1fr / 30px 1fr; position: relative; overflow: hidden; }
.hruler { grid-area: 1 / 2; display: flex; overflow: hidden; border-bottom: 1px solid #969696; }
.hruler span { flex: none; width: 100px; border-left: 1px solid #8f8f8f; padding-left: 2px; font: 12px/18px "Noto Sans", sans-serif; height: 16px; color: #444;
  background: linear-gradient(#989898, #989898) 49px 100% / 1px 11px no-repeat, repeating-linear-gradient(90deg, transparent 0 9px, #989898 9px 10px) 0 100% / 100% 4px no-repeat; }
.vruler { grid-area: 2 / 1; margin-left: 13px; border-top: 1px solid #8a8a8a; background: repeating-linear-gradient(transparent 0 9px, #989898 9px 10px) 100% 0 / 4px 100% no-repeat, #acacac; }
.vruler span { display: block; writing-mode: vertical-rl; transform: rotate(180deg); width: 12px; height: 10px; font: 12px/12px "Noto Sans", sans-serif; color: #444; }
.paper { grid-area: 2 / 2; width: 1010px; border: solid #8e8e8e; border-width: 1px 0 0 1px; background: linear-gradient(90deg, #8e8e8e 1px, #6f9fae 1px) 100% 0 / 10px 100% no-repeat; }
.hint { position: absolute; inset: 0; display: flex; align-items: center; justify-content: center; gap: 18px; padding-bottom: 2px; }
.hint svg { width: 32px; height: 30px; }
.band { height: 10px; flex: none; background: #dadadc; }

.sheetarea { flex: 1; min-height: 0; display: flex; }
.sheet { flex: 1; min-width: 0; position: relative; overflow: hidden; background: #fff; }
#grid { width: 1391px; table-layout: fixed; border-collapse: separate; border-spacing: 0; }
.c24 { width: 24px; } .c80 { width: 80px; } .c90 { width: 90px; } .c124 { width: 124px; } .c139 { width: 139px; }
#grid th, #grid td { padding: 0; height: 24px; border: solid #b9b9b9; border-width: 0 1px 1px 0; overflow: hidden; white-space: nowrap; font-weight: 400; }
#grid th { font-family: "DejaVu Sans Mono", monospace; font-size: 10px; line-height: 12px; background: #e8e8e8; padding-top: 1px; }
#grid thead th { height: 20px; border-right-color: #d4d4d4; padding-top: 3px; }
#grid tbody tr:nth-child(4n+1) > * { height: 23px; }
#grid .free { background: #fff; }
#grid .hot { background: #cdeffb; }
#grid .corner { background: #f5f5f7; }
.corner svg { margin: auto; }
#grid td { font-size: 15px; line-height: 20px; color: #111; padding: 0 1px; }
#grid td.mid { text-align: center; }
#grid td.end { text-align: right; }
.c { font-family: "Liberation Mono", monospace; font-size: 13px; }
#grid td.box { border-color: #000; box-shadow: inset 0 1px #000; position: relative; }
#grid td.picked { outline: 2px solid #5a3410; outline-offset: -2px; background: linear-gradient(135deg, #ed1c24 5px, transparent 5px); }
#grid td.target { outline: 3px solid #ed1c24; outline-offset: -1px; position: relative; z-index: 1; overflow: visible; }
#grid td.mark { background: linear-gradient(#888, #888) 3px 1px / 1px 5px no-repeat, linear-gradient(#888, #888) 1px 3px / 5px 1px no-repeat; }
.flow { position: absolute; left: 1px; top: 4px; width: 6px; height: 16px; }
.pagebreak { position: absolute; left: 761px; top: 19px; bottom: 0; width: 1px; background: repeating-linear-gradient(#000 0 12px, #fff 12px 15px, #000 15px 17px, #fff 17px 20px); }
.vscroll { width: 16px; flex: none; display: flex; flex-direction: column; padding-top: 1px; }
.vscroll button { height: 16px; background: #fff; }
.vscroll .thumb { width: 15px; flex: 687 1 0; margin-bottom: 25px; background: #e1e1e1; }
.hscroll { height: 16px; flex: none; display: flex; padding-top: 1px; }
.hscroll button { width: 16px; background: #fff; }
.hscroll .thumb { flex: 1; margin: 0 94px 0 1px; background: #e1e1e1; }
.sheetbar { height: 21px; flex: none; display: flex; align-items: center; }
.sheettab { width: 67px; height: 19px; background: #fff; gap: 4px; justify-content: flex-start; padding-left: 8px; color: #555; margin-right: 12px; }
.add { margin-right: 8px; }
.add svg { width: 22px; height: 14px; }
.zoombar { margin-left: auto; display: flex; align-items: center; }
.zoombar button { width: 24px; height: 18px; }
.zoombar input[type=range] { appearance: none; width: 214px; height: 12px; margin: 0 6px 0 2px; background: linear-gradient(#d4d4d6, #d4d4d6) center / 100% 1px no-repeat; }
.zoombar input[type=range]::-webkit-slider-thumb { appearance: none; width: 4px; height: 12px; border-radius: 2px; background: #333; }
.zoombar .pct { width: 35px; height: 20px; border: 1px solid #dadadd; padding: 0 4px; font: 13px Roboto, sans-serif; }
.zoombar .m { width: 15px; text-align: center; }

.dialog { position: absolute; left: 200px; top: 277px; width: 884px; height: 592px; z-index: 3; background: #f4f4f7; border: 1px solid #bdbdbd; border-radius: 10px; padding: 0 4px; display: flex; flex-direction: column; }
.dialog header { height: 37px; margin: 0 -4px; padding: 0 14px 2px 11px; background: #f3f3f3; border-radius: 10px 10px 0 0; display: flex; align-items: center; }
.dialog h2 { font-size: 15px; line-height: 20px; color: #8f8f8f; margin-left: 8px; flex: 1; }
.find { height: 29px; display: flex; align-items: center; padding: 0 0 3px 3px; }
.find label { flex: 1; padding-bottom: 2px; }
.find input { width: 240px; height: 22px; border: 1px solid #dadadd; background: #fff; }
.btn { height: 20px; border: 1px solid #d9d9dc; background: #fff; padding: 0 9px 2px; white-space: nowrap; }
.editor { height: 134px; background: #fff; position: relative; }
.line { height: 16px; background: #ffffa6; font: 12px/14px "DejaVu Sans Mono", monospace; }
.line b { color: #0000e0; }
.red { color: #e00000; } .olive { color: #808000; } .purple { color: #7a00c8; }
.formulabox { position: absolute; left: -8px; top: -9px; width: 114px; height: 32px; border: 3px solid #ed1c24; }
.note { position: absolute; left: 135px; top: 0; font-size: 36px; line-height: 36px; color: #ed1c24; white-space: nowrap; }
.options { height: 32px; display: flex; align-items: center; padding: 0 6px 0 9px; white-space: nowrap; line-height: 13px; }
.options label { display: flex; align-items: center; gap: 3px; margin-right: 14px; }
.options input { appearance: none; width: 13px; height: 13px; border: 1px solid #999; background: #fff; display: grid; place-items: center; }
.options input:checked { background: #3491f0; border-color: #3491f0; }
.options input:checked::after { content: ""; width: 4px; height: 8px; border: solid #fff; border-width: 0 2px 2px 0; transform: rotate(45deg); margin-top: -2px; }
.checks { margin-left: auto; display: flex; gap: 5px; padding-bottom: 2px; }
.cols { flex: 1; min-height: 0; display: grid; grid-template-columns: 140px 140px 163px 1fr; column-gap: 4px; }
.col { display: flex; flex-direction: column; min-height: 0; min-width: 0; }
.col.desc { margin-left: -4px; }
.col h3 { height: 24px; line-height: 22px; }
.list { flex: 1; min-height: 0; background: #fff; border: 1px solid #8e8e90; }
.list > li { height: 17px; line-height: 15px; padding-left: 1px; }
.list.names { font: 10px "DejaVu Sans Mono", monospace; }
.names > li { line-height: 17px; }
.list .on { background: #419bf9; color: #fff; }
.varlist { display: flex; justify-content: space-between; padding-left: 7px; overflow: hidden; }
.vartree { flex: 1; border-left: 1px solid #ececec; }
.vartree .top { height: 16px; line-height: 14px; display: flex; align-items: center; padding: 0 0 1px 13px; position: relative; white-space: pre; }
.vartree .top svg, .p { width: 14px; height: 14px; margin-right: 5px; }
.vartree .open::before { content: ""; position: absolute; left: -4px; top: 6px; border: solid transparent; border-width: 4px 4px 0; border-top-color: #aaa; }
.sub ul { margin-left: 19px; border-left: 1px solid #ececec; }
.sub li { height: 15px; line-height: 15px; white-space: nowrap; display: flex; align-items: center; }
.sub li::before { content: ""; width: 9px; border-top: 1px solid #ececec; margin-right: 3px; }
.p { border: 1px solid #419bf9; background: #cfe6fb; color: #555; font: 11px/12px "Open Sans", sans-serif; text-align: center; }
.bar { width: 8px; margin: 1px 1px 17px 0; border-radius: 4px; background: #e8e8e8; }
.text { padding: 3px 4px; border-color: #d6d6d9; }
.dialog footer { height: 28px; flex: none; display: flex; justify-content: flex-end; gap: 10px; padding: 4px 10px 0 0; }

.strip { width: 40px; flex: none; background: #e8e8e8; display: flex; flex-direction: column; align-items: center; gap: 4px; padding-top: 12px; }
.strip .collapse { width: 12px; height: 10px; margin-bottom: 3px; }
.strip button { width: 32px; height: 28px; }
.strip button.on { background: #f5f5f7; }
.strip button svg { width: 16px; height: 16px; }
.strip button .cond { width: 18px; }
.props { width: 246px; flex: none; }
.props header { height: 27px; border-bottom: 1px solid #d8d8da; display: flex; align-items: center; justify-content: space-between; padding: 0 6px 2px 10px; }
.props form { padding: 10px 10px 0; display: grid; gap: 10px; }
.row { display: grid; grid-template-columns: 56px 1fr auto; align-items: center; }
.row.short { grid-template-columns: 44px 1fr; }
.row label { padding-bottom: 2px; }
.row input { height: 20px; width: 100%; min-width: 0; border: 1px solid #dadadd; background: #fff; padding: 0 3px; font: 12px "Liberation Sans", sans-serif; }
.fxbtn { width: 20px; height: 20px; margin-left: 5px; border: 1px solid #dadadd; background: #fff; font-size: 13px; }
.fxbtn small { font-size: 9px; }

.taskbar { height: 60px; flex: none; background: #070707; color: #fff; display: flex; justify-content: space-between; align-items: center; }
.apps { display: flex; padding-left: 13px; }
.apps button { width: 55px; height: 60px; position: relative; }
.apps svg { width: 30px; height: 30px; }
.apps .fr { width: 24px; height: 25px; }
.apps button::after { content: ""; position: absolute; bottom: 6px; width: 8px; height: 4px; border-radius: 2px; background: #999; }
.apps .start::after { display: none; }
.ty { position: absolute; color: #222; font: 17px "Liberation Serif", serif; }
.tray { display: flex; align-items: center; padding-right: 25px; }
.tray > span { width: 40px; display: flex; justify-content: center; }
.tray > span:first-child { width: 58px; }
.tray > .sys { width: 30px; }
.tray svg { width: 20px; height: 20px; }
.tray .big { width: 28px; height: 24px; }
.tray > .ime { font-size: 18px; line-height: 24px; margin-right: 5px; }
.clock { display: flex; flex-direction: column; align-items: flex-end; font: 14px/20px "Noto Sans", sans-serif; margin: 0 9px 0 19px; }
```
FILE: grid.js
```js
// Horizontal ruler labels, one per hundred units
const ruler = document.getElementById('hruler');
for (let n = 0; n <= 1200; n += 100) {
  const mark = document.createElement('span');
  mark.textContent = n;
  ruler.append(mark);
}
// Empty rows below the two template rows
const body = document.querySelector('#grid tbody');
for (let r = 3; r <= 31; r++) {
  const row = body.insertRow();
  const head = document.createElement('th');
  head.textContent = r;
  head.className = 'free';
  row.append(head);
  for (let c = 0; c < 14; c++) row.insertCell();
}
```
